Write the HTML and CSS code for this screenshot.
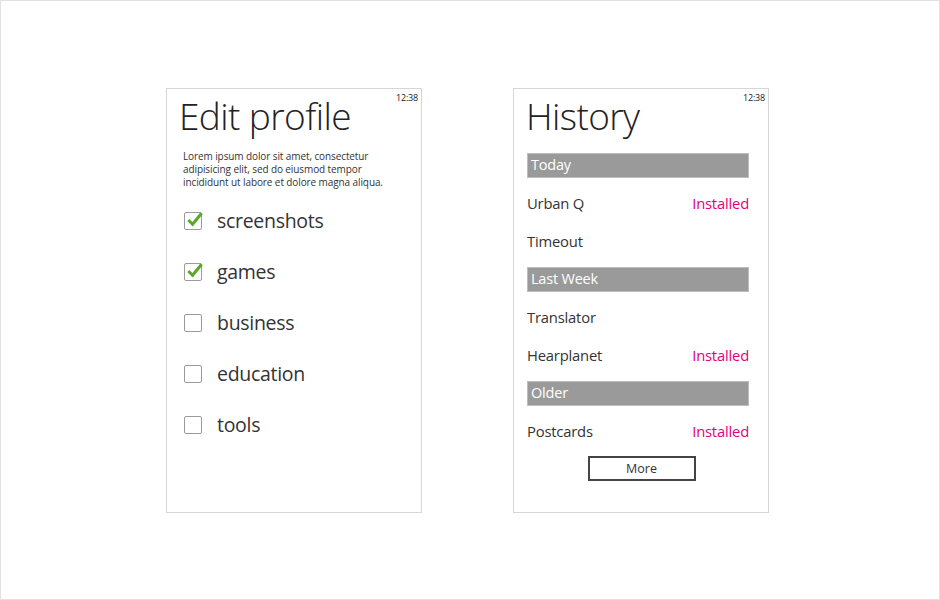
FILE: index.html
```html
<!DOCTYPE html>
<html>
<head>
<meta charset="utf-8">
<link rel="stylesheet" href="styles.css">
</head>
<body>
<div class="frame">
  <div class="panel">
    <div class="clock">12:38</div>
    <h1 class="title">Edit profile</h1>
    <p class="lorem">Lorem ipsum dolor sit amet, consectetur adipisicing elit, sed do eiusmod tempor incididunt ut labore et dolore magna aliqua.</p>
    <ul class="checks">
      <li class="check-row"><span class="box checked"><svg viewBox="0 0 20 20" class="tick"><path d="M3.5 10.5 L8 15 L17.5 3.5" /></svg></span><span class="label">screenshots</span></li>
      <li class="check-row"><span class="box checked"><svg viewBox="0 0 20 20" class="tick"><path d="M3.5 10.5 L8 15 L17.5 3.5" /></svg></span><span class="label">games</span></li>
      <li class="check-row"><span class="box"></span><span class="label">business</span></li>
      <li class="check-row"><span class="box"></span><span class="label">education</span></li>
      <li class="check-row"><span class="box"></span><span class="label">tools</span></li>
    </ul>
  </div>
  <div class="panel">
    <div class="clock">12:38</div>
    <h1 class="title">History</h1>
    <div class="list">
      <div class="section">Today</div>
      <div class="row"><span class="name">Urban Q</span><span class="status">Installed</span></div>
      <div class="row"><span class="name">Timeout</span></div>
      <div class="section">Last Week</div>
      <div class="row"><span class="name">Translator</span></div>
      <div class="row"><span class="name">Hearplanet</span><span class="status">Installed</span></div>
      <div class="section">Older</div>
      <div class="row"><span class="name">Postcards</span><span class="status">Installed</span></div>
      <div class="more-wrap"><button class="more">More</button></div>
    </div>
  </div>
</div>
</body>
</html>
```

FILE: styles.css
```css
* { box-sizing: border-box; }
html, body { margin: 0; padding: 0; background: #fff; }
body { font-family: "Open Sans", "Noto Sans", sans-serif; color: #333; }

.frame {
  width: 940px;
  height: 600px;
  border: 1px solid #e2e2e2;
  display: flex;
  align-items: flex-start;
  gap: 91px;
  padding: 87px 0 0 165px;
}

.panel {
  position: relative;
  width: 256px;
  height: 425px;
  border: 1px solid #d6d6d6;
  background: #fff;
}

.clock {
  position: absolute;
  top: 2px;
  right: 3px;
  font-size: 9px;
  color: #222;
  letter-spacing: -0.2px;
}

.title {
  margin: 3px 0 0 12px;
  font-weight: 300;
  font-size: 37px;
  line-height: 48px;
  letter-spacing: -0.6px;
  color: #222;
}

.lorem {
  margin: 10px 0 0 16px;
  width: 220px;
  font-size: 10px;
  line-height: 13px;
  color: #333;
  letter-spacing: -0.1px;
}

.checks {
  list-style: none;
  margin: 6px 0 0 17px;
  padding: 0;
}
.check-row {
  display: flex;
  align-items: center;
  height: 51px;
}
.box {
  position: relative;
  width: 18px;
  height: 18px;
  border: 1.5px solid #9b9b9b;
  border-radius: 2px;
  margin-right: 15px;
}
.tick {
  position: absolute;
  left: 0;
  top: -3px;
  width: 19px;
  height: 19px;
  fill: none;
  stroke: #5aa829;
  stroke-width: 3.2;
  stroke-linecap: butt;
  stroke-linejoin: miter;
}
.label {
  font-size: 19.5px;
  color: #333;
  letter-spacing: -0.3px;
}

.list {
  margin: 13px 19px 0 13px;
}
.section {
  height: 25px;
  margin: 7px 0 6px;
  background: #9a9a9a;
  border: 1px solid #bdbdbd;
  color: #fff;
  font-size: 14.5px;
  line-height: 22px;
  padding-left: 3px;
  letter-spacing: -0.2px;
}
.section:first-child { margin-top: 0; }
.row {
  height: 38px;
  display: flex;
  justify-content: space-between;
  align-items: center;
  font-size: 14.8px;
  letter-spacing: -0.2px;
}
.name { color: #333; }
.status { color: #e5007d; }
.more-wrap {
  display: flex;
  justify-content: center;
  margin-top: 6px;
  padding-left: 7px;
}
.more {
  width: 108px;
  height: 25px;
  border: 2px solid #444;
  background: #fff;
  font-family: "Open Sans", "Noto Sans", sans-serif;
  font-size: 12.5px;
  color: #333;
  padding: 0;
}
```
